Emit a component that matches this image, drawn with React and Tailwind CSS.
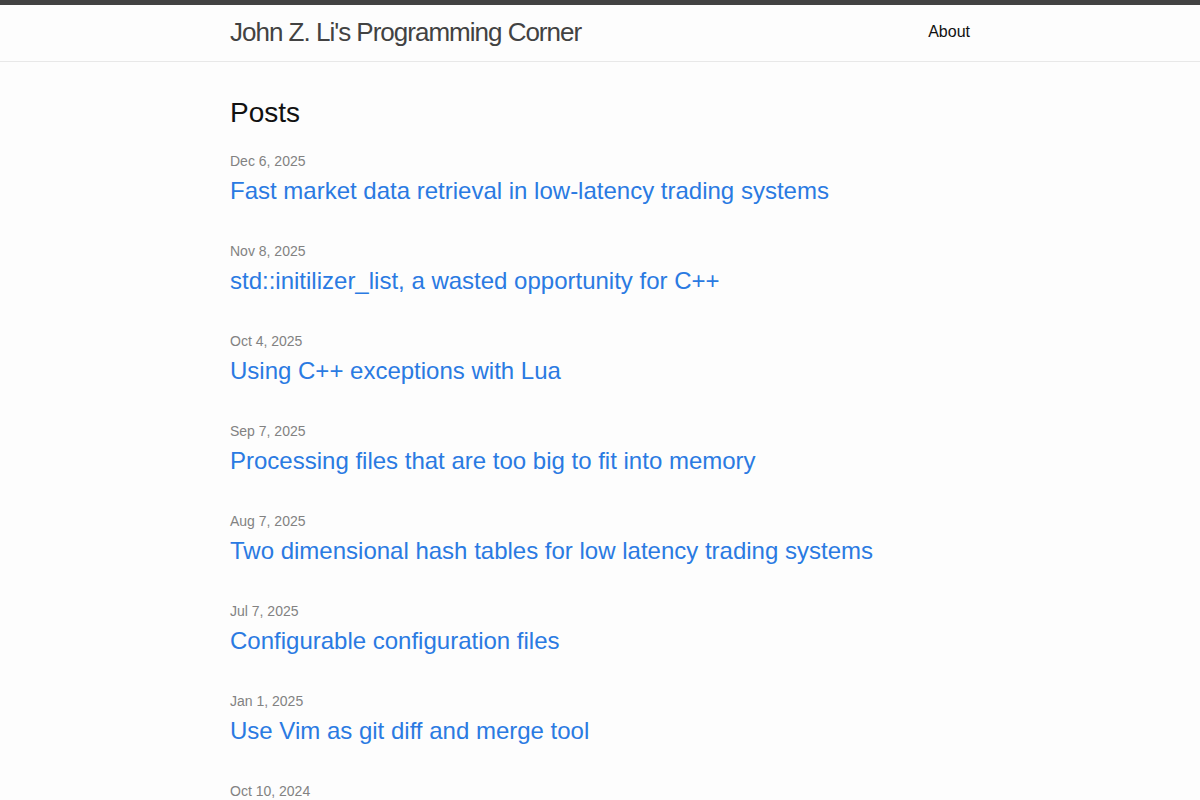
export default function App() {
  const posts = [
    ["Dec 6, 2025", "Fast market data retrieval in low-latency trading systems"],
    ["Nov 8, 2025", "std::initilizer_list, a wasted opportunity for C++"],
    ["Oct 4, 2025", "Using C++ exceptions with Lua"],
    ["Sep 7, 2025", "Processing files that are too big to fit into memory"],
    ["Aug 7, 2025", "Two dimensional hash tables for low latency trading systems"],
    ["Jul 7, 2025", "Configurable configuration files"],
    ["Jan 1, 2025", "Use Vim as git diff and merge tool"],
    ["Oct 10, 2024", ""],
  ];
  return (
    <div className="min-h-screen bg-[#fdfdfd] text-[#111] text-[16px] leading-[24px]" style={{ fontFamily: '"Liberation Sans", Arial, sans-serif' }}>
      <header className="border-t-[5px] border-t-[#424242] border-b border-b-[#e8e8e8] min-h-[62px]">
        <div className="max-w-[740px] mx-auto flex justify-between items-start">
          <a href="#" className="text-[26px] leading-[54px] font-light tracking-[-1px] text-[#424242]">John Z. Li's Programming Corner</a>
          <nav className="leading-[54px]">
            <a href="#" className="text-[#111]">About</a>
          </nav>
        </div>
      </header>
      <main className="py-[30px]">
        <div className="max-w-[740px] mx-auto">
          <h2 className="text-[28px] leading-[42px] mb-[15px]">Posts</h2>
          <ul>
            {posts.map(([d, t]) => (
              <li key={d} className="mb-[30px]">
                <span className="text-[14px] text-[#828282]">{d}</span>
                {t && (
                  <h3 className="text-[24px] leading-[36px]">
                    <a href="#" className="text-[#2a7ae2]">{t}</a>
                  </h3>
                )}
              </li>
            ))}
          </ul>
        </div>
      </main>
    </div>
  );
}
